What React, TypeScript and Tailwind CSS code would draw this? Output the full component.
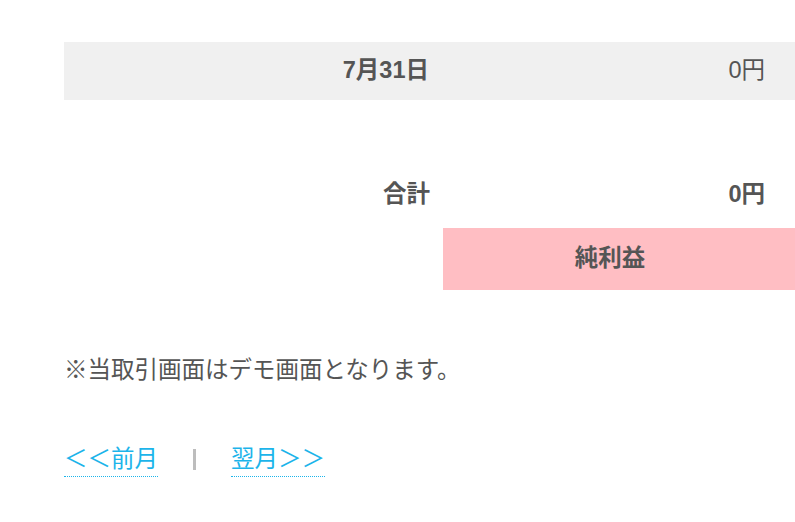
const font = "font-['Liberation_Sans','Noto_Sans_CJK_JP',sans-serif]";

export default function App() {
  return (
    <div className={`${font} w-[795px] h-[522px] overflow-hidden bg-white text-[#555] text-[23.5px] pl-[64px] pt-[42px]`}>
      {/* 日別行 */}
      <div className="grid grid-cols-[379px_1fr] h-[58px] bg-[#f0f0f0] items-center">
        <div className="text-right pr-[14px] font-bold">7月31日</div>
        <div className="text-right pr-[30px]">0円</div>
      </div>

      {/* 合計 */}
      <div className="grid grid-cols-[379px_1fr] h-[58px] items-center mt-[66px] font-bold">
        <div className="text-right pr-[13px]">合計</div>
        <div className="text-right pr-[30px]">0円</div>
      </div>

      {/* 純利益 */}
      <div className="grid grid-cols-[379px_1fr] mt-[4px]">
        <div />
        <div className="h-[62px] bg-[#ffbec3] flex items-center justify-center pr-[18px] font-bold">純利益</div>
      </div>

      <p className="mt-[64px] leading-[32px]">※当取引画面はデモ画面となります。</p>

      {/* 前月・翌月 */}
      <div className="mt-[59px] flex items-center">
        <a href="#" className="text-[#1cb4ea] leading-[28px] pb-[3px] border-b border-dotted border-[#1cb4ea]">＜＜前月</a>
        <span className="mx-[35px] mb-[4px] w-[3px] h-[21px] bg-[#bdbdbd]" />
        <a href="#" className="text-[#1cb4ea] leading-[28px] pb-[3px] border-b border-dotted border-[#1cb4ea]">翌月＞＞</a>
      </div>
    </div>
  );
}
